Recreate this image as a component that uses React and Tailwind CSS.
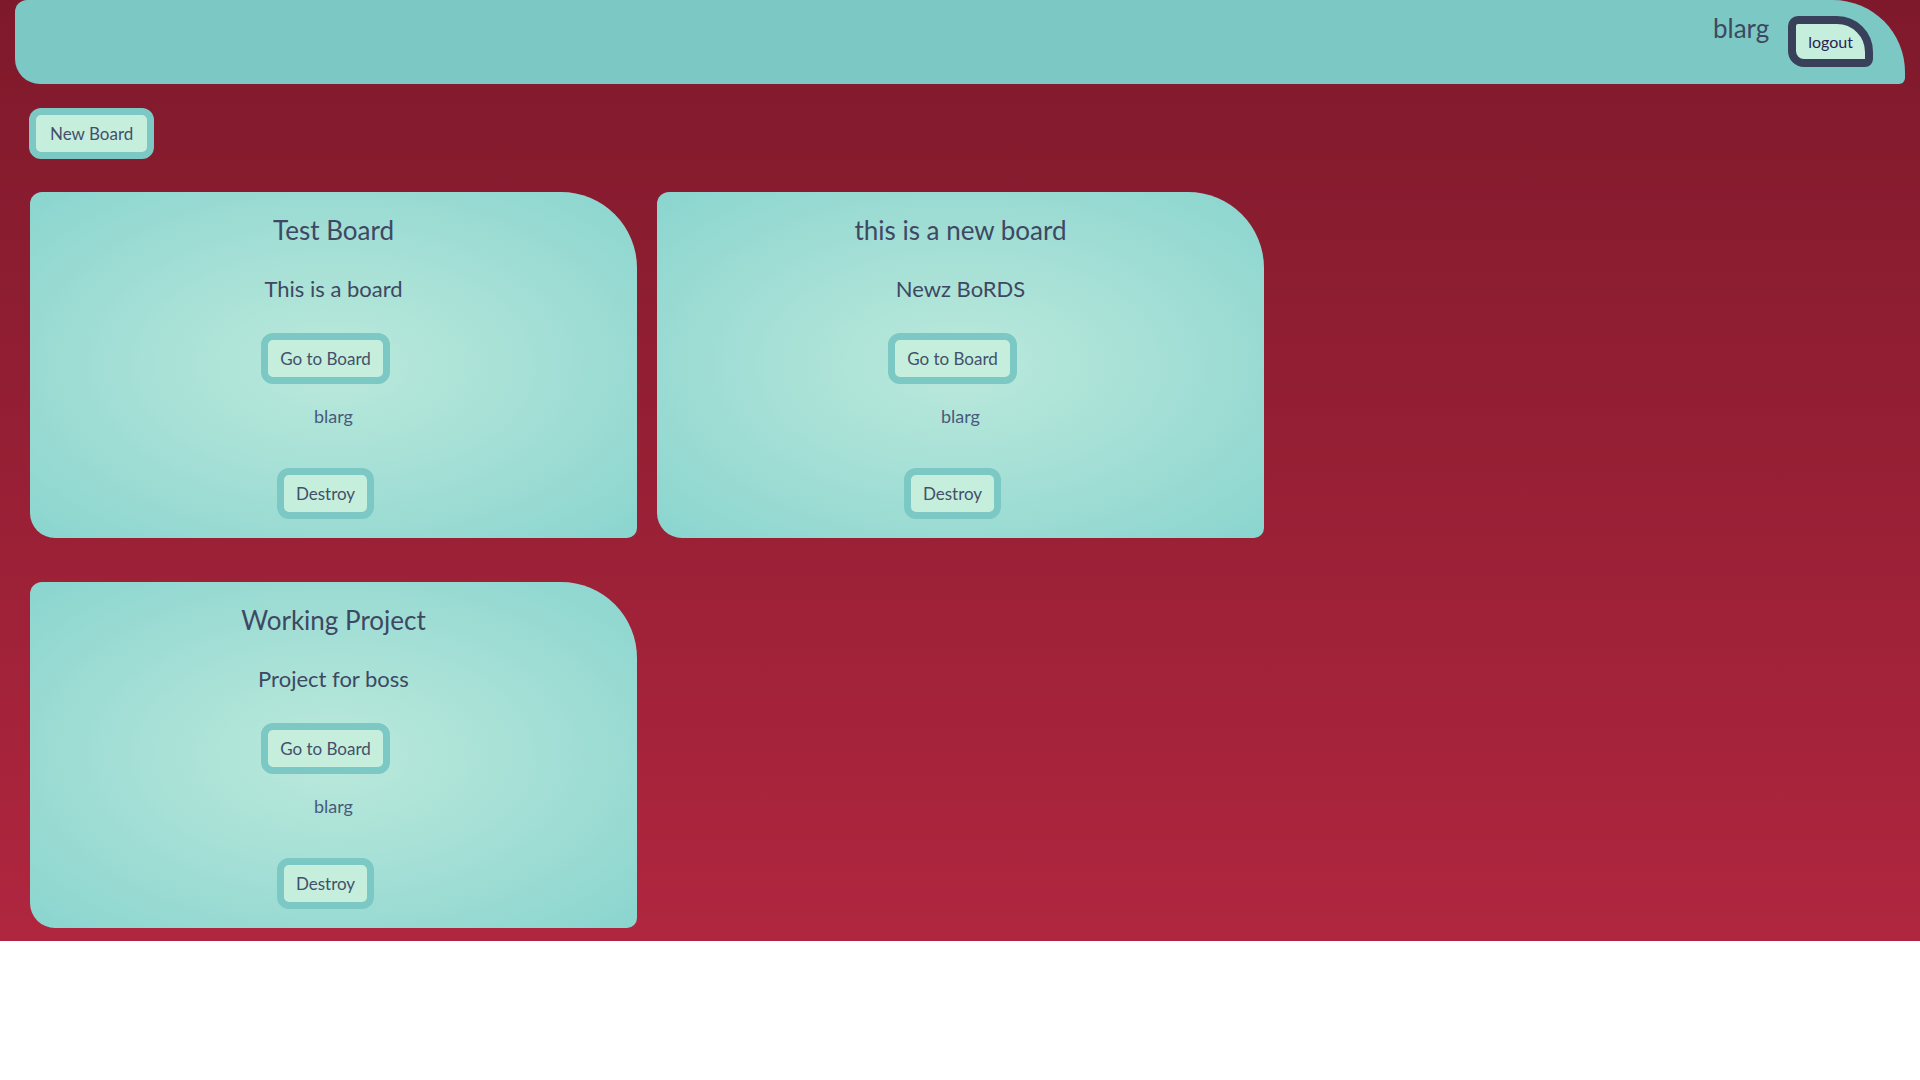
import React from 'react';

const boards = [
    { title: 'Test Board', description: 'This is a board', owner: 'blarg' },
    { title: 'this is a new board', description: 'Newz BoRDS', owner: 'blarg' },
    { title: 'Working Project', description: 'Project for boss', owner: 'blarg' },
];

const Button = ({ children, className = '' }) => (
    <button className={`border-[7px] border-[#7cc8c4] bg-[#c6eedd] rounded-[12px] h-[51px] text-[17px] leading-5 text-[#435069] ${className}`}>
        {children}
    </button>
);

const BoardCard = ({ board }) => (
    <div className="flex flex-col items-center h-[346px] pt-[14px] rounded-tl-[12px] rounded-tr-[76px] rounded-br-[10px] rounded-bl-[25px] bg-[radial-gradient(ellipse_at_center,#bbe9db_0%,#a6e0d6_45%,#8ad5cf_100%)]">
        <h2 className="text-[26px] leading-8 text-[#3e4862] mt-[8px]">{board.title}</h2>
        <p className="text-[22px] leading-7 text-[#3e4862] mt-[29px]">{board.description}</p>
        <Button className="mt-[30px] mr-4 px-[12px]">Go to Board</Button>
        <div className="text-[18px] leading-6 text-[#475a7c] mt-[20px]">{board.owner}</div>
        <Button className="mt-[40px] mr-4 px-[12px]">Destroy</Button>
    </div>
);

const App = () => {
    return (
        <div className="min-h-[940px] pb-[13px] bg-[linear-gradient(to_bottom,#7e192b,#b0263f)] font-['Lato',sans-serif]">
            <header className="mx-[15px] h-[84px] flex justify-end items-start pr-[32px] bg-[#7cc8c4] rounded-tl-[12px] rounded-tr-[72px] rounded-br-[6px] rounded-bl-[25px]">
                <span className="text-[26px] leading-8 text-[#3e4862] mt-[12px] mr-[19px]">blarg</span>
                <button className="mt-[16px] h-[51px] px-[12px] border-[8px] border-[#38405a] bg-[#c6eedd] rounded-tl-[10px] rounded-tr-[36px] rounded-br-[8px] rounded-bl-[16px] text-[16px] leading-5 text-[#2a2452]">
                    logout
                </button>
            </header>

            <div className="px-[29px]">
                <div className="mt-[24px]">
                    <Button className="px-[14px]">New Board</Button>
                </div>

                <div className="mt-[33px] grid grid-cols-[607px_607px] gap-x-[20px] gap-y-[44px] pl-[1px]">
                    {boards.map((board, i) => <BoardCard board={board} key={i} />)}
                </div>
            </div>
        </div>
    );
};

export default App;
